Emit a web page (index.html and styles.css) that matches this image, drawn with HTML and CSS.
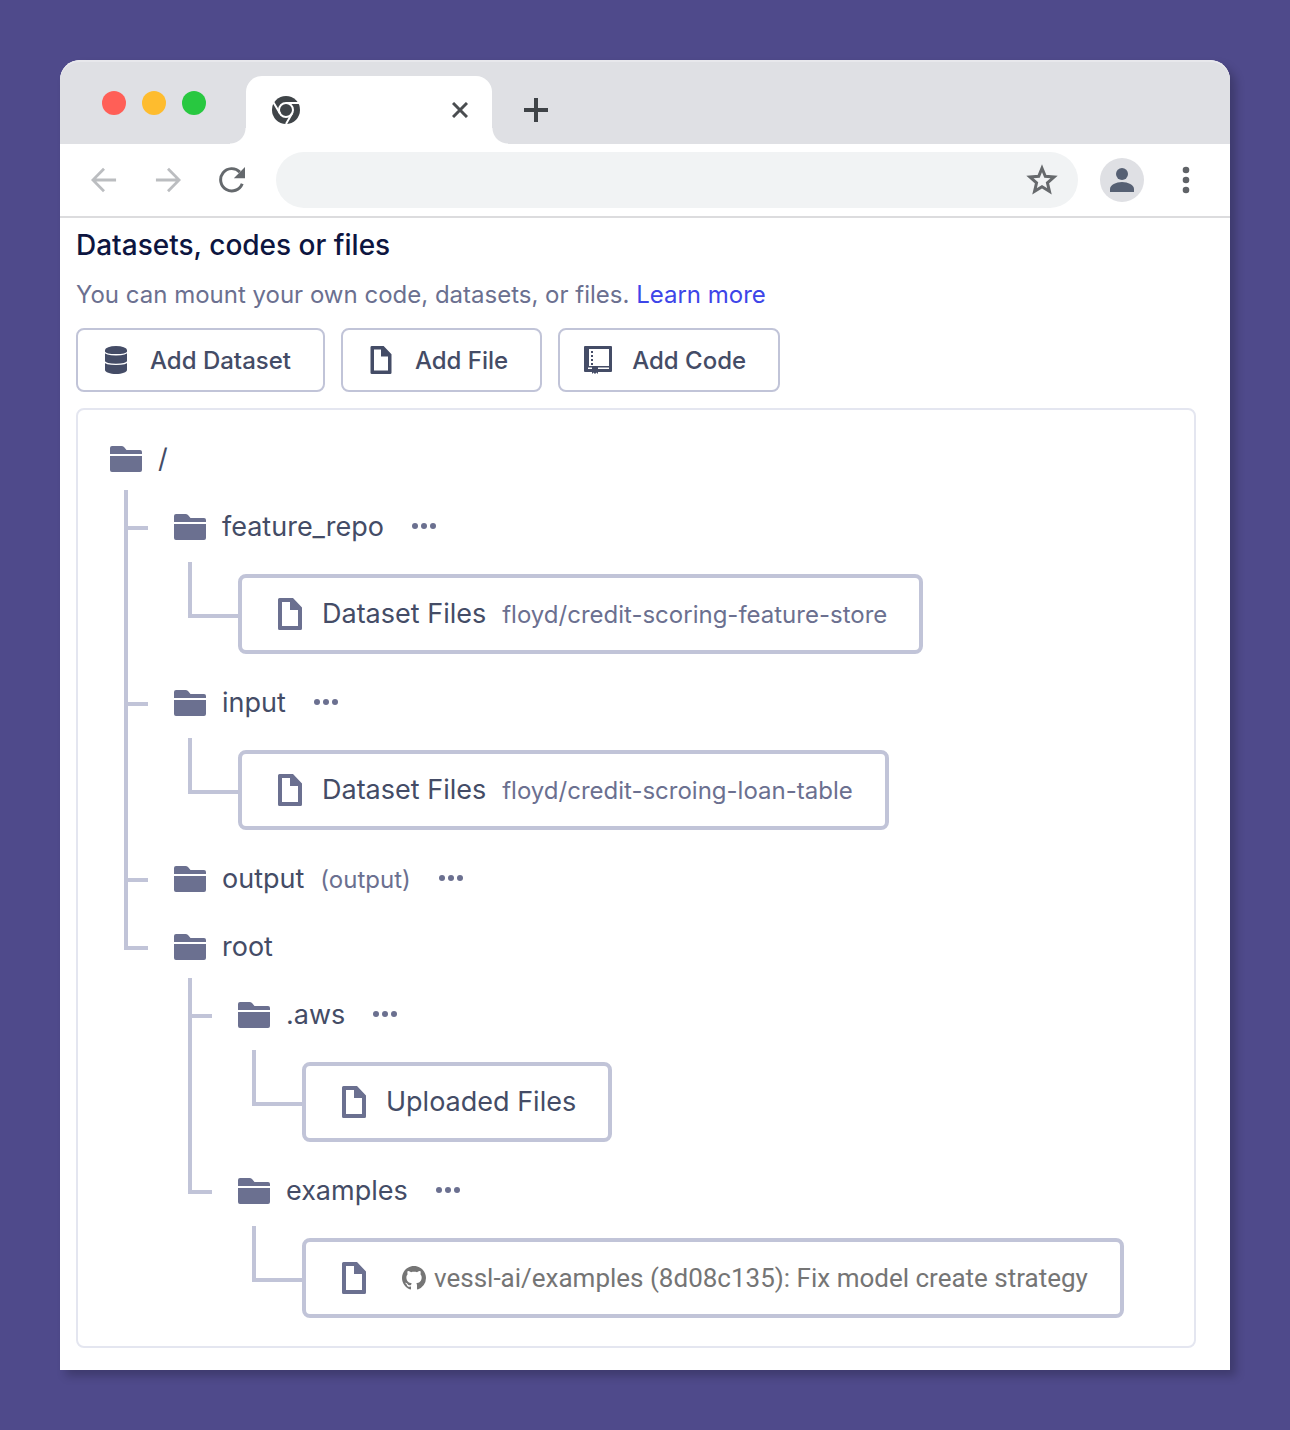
FILE: index.html
```html
<!DOCTYPE html>
<html lang="en">
<head>
<meta charset="utf-8">
<meta name="viewport" content="width=device-width, initial-scale=1">
<title>Datasets, codes or files</title>
<link rel="stylesheet" href="styles.css">
</head>
<body>
<svg class="sprite" aria-hidden="true">
  <symbol id="folder" viewBox="0 0 32 32">
    <path d="M0 12V5a2 2 0 0 1 2-2h9.500q1.500 0 2.500 1l2.500 3H30a2 2 0 0 1 2 2v3zM0 13h32v14a2 2 0 0 1-2 2H2a2 2 0 0 1-2-2z"/>
    <path d="M0 11h32v2H0z" fill="#fff"/>
  </symbol>
  <symbol id="file" viewBox="0 0 32 32">
    <path fill-rule="evenodd" d="M5.500 0H19l9 9.500v21a1.500 1.500 0 0 1-1.500 1.500h-21A1.500 1.500 0 0 1 4 30.500v-29A1.500 1.500 0 0 1 5.500 0zM8 4v24h16V12h-8V4z"/>
  </symbol>
  <symbol id="more" viewBox="0 0 32 32">
    <circle cx="7" cy="15" r="3"/><circle cx="16" cy="15" r="3"/><circle cx="25" cy="15" r="3"/>
  </symbol>
</svg>
<div class="browser">
  <header>
    <div class="tabs">
      <div class="lights"><span class="light close"></span><span class="light minimise"></span><span class="light expand"></span></div>
      <span class="flare"></span>
      <div class="tab">
        <svg class="tab-logo" viewBox="0 0 28 28" aria-hidden="true">
          <circle cx="14" cy="14" r="14" fill="#3f4448"/>
          <circle cx="14" cy="14" r="7" fill="none" stroke="#fff" stroke-width="2"/>
          <path d="M14 7h13M8 17.500 1.500 6.500M20 17.500 14 28" fill="none" stroke="#fff" stroke-width="2"/>
        </svg>
        <button class="icon-button" type="button" aria-label="Close tab"><svg class="x-icon" viewBox="0 0 16 16"><path d="m1 1 14 14M15 1 1 15" fill="none" stroke="#4a4d50" stroke-width="3"/></svg></button>
      </div>
      <span class="flare flare-right"></span>
      <button class="icon-button new-tab" type="button" aria-label="New tab"><svg class="plus-icon" viewBox="0 0 24 24"><path d="M12 0v24M0 12h24" fill="none" stroke="#3f4347" stroke-width="4"/></svg></button>
    </div>
    <div class="toolbar">
      <button class="icon-button nav" type="button" aria-label="Back"><svg class="nav-icon" viewBox="0 0 28 28"><path d="M27 14H3M14 2 2 14l12 12" fill="none" stroke="#bbbdc0" stroke-width="3"/></svg></button>
      <button class="icon-button nav" type="button" aria-label="Forward"><svg class="nav-icon" viewBox="0 0 28 28"><path d="M1 14h24M14 2l12 12-12 12" fill="none" stroke="#bbbdc0" stroke-width="3"/></svg></button>
      <button class="icon-button nav" type="button" aria-label="Reload"><svg class="nav-icon" viewBox="0 0 28 28"><path d="M25 18A12 12 0 1 1 22.500 5.500" fill="none" stroke="#65696d" stroke-width="3.200"/><path d="M28 0v12H16z" fill="#65696d"/></svg></button>
      <div class="address">
        <input type="text" aria-label="Address">
        <button class="icon-button" type="button" aria-label="Bookmark"><svg class="star-icon" viewBox="0 0 30 30"><path d="m15 4 3.100 7.500 8.200.7-6.200 5.400 1.900 8-7-4.200-7 4.200 1.900-8-6.200-5.400 8.200-.7z" fill="none" stroke="#66696c" stroke-width="2.800"/></svg></button>
      </div>
      <button class="icon-button avatar" type="button" aria-label="Profile"><svg class="avatar-icon" viewBox="0 0 24 24"><circle cx="12" cy="6" r="6" fill="#566073"/><path d="M0 24v-3c0-4 6-7 12-7s12 3 12 7v3z" fill="#566073"/></svg></button>
      <button class="icon-button menu" type="button" aria-label="Menu"><svg class="nav-icon" viewBox="0 0 28 28" fill="#606367"><circle cx="14" cy="4" r="3.300"/><circle cx="14" cy="14" r="3.300"/><circle cx="14" cy="24" r="3.300"/></svg></button>
    </div>
  </header>
  <main>
    <h1>Datasets, codes or files</h1>
    <p class="intro">You can mount your own code, datasets, or files. <a href="#">Learn more</a></p>
    <div class="actions">
      <button class="action" type="button"><svg viewBox="0 0 28 28"><path d="M3 4v20c0 2.200 5 4 11 4s11-1.800 11-4V4z"/><ellipse cx="14" cy="4" rx="11" ry="4"/><path d="M2 5.500c2 4.300 22 4.300 24 0M2 15c2 4.600 22 4.600 24 0" fill="none" stroke="#fff" stroke-width="1.300"/></svg>Add Dataset</button>
      <button class="action" type="button"><svg viewBox="2 0 28 32"><use href="#file" width="32" height="32"/></svg>Add File</button>
      <button class="action" type="button"><svg viewBox="0 0 28 28"><path fill-rule="evenodd" d="M1 0h26a1 1 0 0 1 1 1v24a1 1 0 0 1-1 1H14v2l-1.500-1.500L11 28l-1.500-1.500L8 28v-2H1a1 1 0 0 1-1-1V1a1 1 0 0 1 1-1zM5 3v17h20V3zM4 21.500v1.500h4v-1.500zm10 0v1.500h11v-1.500z"/><path d="M8 5v14" stroke="#444c66" stroke-width="2" stroke-dasharray="2 2"/></svg>Add Code</button>
    </div>
    <div class="panel">
      <div class="row"><svg class="icon"><use href="#folder"/></svg><span>/</span></div>
      <ul class="branch">
        <li>
          <div class="node">
            <div class="row"><svg class="icon"><use href="#folder"/></svg><span>feature_repo</span><button class="icon-button more" type="button" aria-label="More for feature_repo"><svg class="icon"><use href="#more"/></svg></button></div>
            <div class="leaf"><div class="card"><svg class="icon"><use href="#file"/></svg><div class="label"><span>Dataset Files</span><span class="detail">floyd/credit-scoring-feature-store</span></div></div></div>
          </div>
        </li>
        <li>
          <div class="node">
            <div class="row"><svg class="icon"><use href="#folder"/></svg><span>input</span><button class="icon-button more" type="button" aria-label="More for input"><svg class="icon"><use href="#more"/></svg></button></div>
            <div class="leaf"><div class="card"><svg class="icon"><use href="#file"/></svg><div class="label"><span>Dataset Files</span><span class="detail">floyd/credit-scroing-loan-table</span></div></div></div>
          </div>
        </li>
        <li>
          <div class="node">
            <div class="row"><svg class="icon"><use href="#folder"/></svg><div class="label"><span>output</span><span class="detail">(output)</span></div><button class="icon-button more" type="button" aria-label="More for output"><svg class="icon"><use href="#more"/></svg></button></div>
          </div>
        </li>
        <li>
          <div class="node">
            <div class="row"><svg class="icon"><use href="#folder"/></svg><span>root</span></div>
            <ul class="branch">
              <li>
                <div class="node">
                  <div class="row"><svg class="icon"><use href="#folder"/></svg><span>.aws</span><button class="icon-button more" type="button" aria-label="More for .aws"><svg class="icon"><use href="#more"/></svg></button></div>
                  <div class="leaf"><div class="card"><svg class="icon"><use href="#file"/></svg><span>Uploaded Files</span></div></div>
                </div>
              </li>
              <li>
                <div class="node">
                  <div class="row"><svg class="icon"><use href="#folder"/></svg><span>examples</span><button class="icon-button more" type="button" aria-label="More for examples"><svg class="icon"><use href="#more"/></svg></button></div>
                  <div class="leaf"><div class="card"><svg class="icon"><use href="#file"/></svg><span class="commit"><svg class="github" viewBox="0 0 16 16" aria-hidden="true"><path d="M8 0C3.580 0 0 3.580 0 8c0 3.540 2.290 6.530 5.470 7.590.4.070.55-.17.55-.38 0-.19-.01-.82-.01-1.490-2.010.37-2.530-.49-2.690-.94-.09-.23-.48-.94-.82-1.130-.28-.15-.68-.52-.01-.53.63-.01 1.080.58 1.230.82.72 1.210 1.870.87 2.330.66.070-.52.28-.87.51-1.070-1.780-.2-3.640-.89-3.640-3.950 0-.87.31-1.590.82-2.150-.08-.2-.36-1.020.08-2.120 0 0 .67-.21 2.200.82.64-.18 1.320-.27 2-.27s1.360.09 2 .27c1.530-1.040 2.200-.82 2.200-.82.44 1.100.16 1.920.08 2.120.51.56.82 1.270.82 2.150 0 3.070-1.870 3.750-3.650 3.950.29.25.54.73.54 1.480 0 1.070-.01 1.930-.01 2.200 0 .21.15.46.55.38A8.010 8.010 0 0 0 16 8c0-4.420-3.580-8-8-8z"/></svg><span>vessl-ai/examples (8d08c135): Fix model create strategy</span></span></div></div>
                </div>
              </li>
            </ul>
          </div>
        </li>
      </ul>
    </div>
  </main>
</div>
</body>
</html>
```
FILE: styles.css
```css
*, ::before, ::after { box-sizing: border-box; }

body {
  margin: 0;
  padding: 60px;
  background: #4f4a8b;
  color: #444c66;
  font-family: Inter, "Liberation Sans", sans-serif;
}

svg { display: block; flex: none; }
.sprite { display: none; }

.icon-button {
  display: flex;
  align-items: center;
  justify-content: center;
  flex: none;
  padding: 0;
  border: 0;
  background: none;
}

/* Browser window */
.browser {
  background: #fff;
  border-radius: 20px 20px 0 0;
  box-shadow: 6px 6px 10px rgba(0, 0, 0, .22);
}

.tabs {
  display: flex;
  align-items: flex-end;
  height: 84px;
  background: #dfe0e4;
  border-top: 2px solid #e8e8ec;
  border-radius: 20px 20px 0 0;
}
.lights { display: flex; align-self: center; gap: 16px; width: 170px; padding-left: 42px; }
.light { width: 24px; height: 24px; border-radius: 50%; }
.close { background: #ff5f57; }
.minimise { background: #febc2e; }
.expand { background: #28c840; }
.flare { width: 16px; height: 16px; background: radial-gradient(circle at 0 0, #dfe0e4 15px, #fff 16px); }
.flare-right { background: radial-gradient(circle at 100% 0, #dfe0e4 15px, #fff 16px); }
.tab {
  display: flex;
  align-items: center;
  justify-content: space-between;
  width: 246px;
  height: 68px;
  padding: 0 24px 0 26px;
  background: #fff;
  border-radius: 16px 16px 0 0;
}
.tab-logo { width: 28px; height: 28px; }
.x-icon { width: 16px; height: 16px; }
.plus-icon { width: 24px; height: 24px; }
.new-tab { height: 68px; padding-left: 16px; }

.toolbar {
  display: flex;
  align-items: center;
  height: 74px;
  padding: 0 28px 0 20px;
  border-bottom: 2px solid #dcdcde;
}
.nav { width: 48px; height: 48px; margin-right: 16px; }
.nav-icon { width: 28px; height: 28px; }
.nav .nav-icon { width: 26px; height: 26px; }
.address {
  display: flex;
  flex: 1;
  height: 56px;
  margin-left: 4px;
  padding: 0 20px 0 28px;
  border-radius: 28px;
  background: #f1f3f4;
}
.address input { flex: 1; min-width: 0; border: 0; background: none; font: 24px Roboto, sans-serif; }
.star-icon { width: 32px; height: 32px; }
.avatar { width: 44px; height: 44px; margin: 0 26px 0 22px; border-radius: 50%; background: #dfe0e4; }
.avatar-icon { width: 24px; height: 24px; }
.menu { width: 32px; height: 48px; }

/* Page */
main { padding: 8px 34px 22px 16px; }
h1 { margin: 0; color: #0d1540; font-size: 28px; line-height: 38px; font-weight: 500; }
.intro { margin: 14px 0 16px; color: #6b7090; font-size: 24px; line-height: 34px; }
.intro a { color: #3d45e8; text-decoration: none; }

.actions { display: flex; flex-wrap: wrap; gap: 16px; margin-bottom: 16px; }
.action {
  display: flex;
  align-items: center;
  gap: 20px;
  height: 64px;
  padding: 0 32px 0 24px;
  border: 2px solid #c1c4d8;
  border-radius: 8px;
  background: #fff;
  color: #444c66;
  font: 500 24px Inter, "Liberation Sans", sans-serif;
}
.action svg { width: 28px; height: 28px; fill: #444c66; }

/* Mount tree */
.panel { padding: 16px 32px 12px; border: 2px solid #e4e6f0; border-radius: 8px; font-size: 27px; line-height: 36px; }
.icon { width: 32px; height: 32px; fill: #6b7090; }
.row { display: flex; align-items: center; gap: 16px; height: 68px; padding-bottom: 2px; }
.label { display: flex; align-items: baseline; gap: 16px; }
.more { margin-left: 8px; }
.detail { color: #6b7090; font-size: 24px; }

.branch { margin: 0 0 0 14px; padding: 0; list-style: none; }
.branch > li { display: flex; align-items: flex-start; }
.branch > li:first-child { margin-top: -4px; padding-top: 4px; }
.branch > li:not(:last-child) { border-left: 4px solid #c1c4d8; }
.branch > li::before { content: ""; flex: none; width: 20px; height: 36px; border-bottom: 4px solid #c1c4d8; }
.branch > li:last-child::before { width: 24px; border-left: 4px solid #c1c4d8; }
.node { flex: 1; min-width: 0; margin-left: 26px; }

.leaf { display: flex; align-items: flex-start; margin-left: 14px; padding-bottom: 16px; }
.leaf::before { content: ""; flex: none; width: 50px; height: 56px; border: solid #c1c4d8; border-width: 0 0 4px 4px; }
.card {
  display: flex;
  align-items: center;
  gap: 16px;
  height: 80px;
  margin-top: 12px;
  padding: 0 32px;
  border: 4px solid #c1c4d8;
  border-radius: 8px;
}
.commit { display: flex; align-items: center; gap: 8px; margin-left: 16px; color: #757575; font: 26px/36px Roboto, sans-serif; }
.github { width: 24px; height: 24px; fill: #757575; }
```
